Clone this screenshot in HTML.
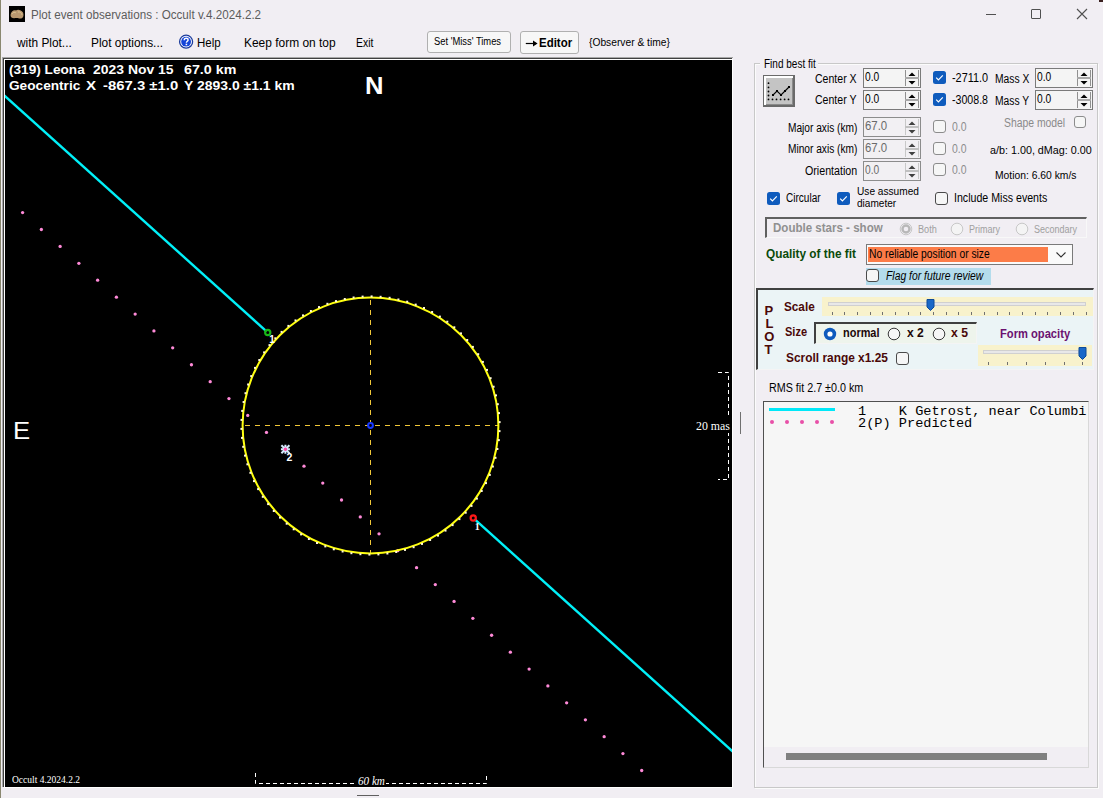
<!DOCTYPE html>
<html><head><meta charset="utf-8"><style>
html,body{margin:0;padding:0;}
body{width:1103px;height:798px;overflow:hidden;position:relative;background:#f1eef3;font-family:"Liberation Sans",sans-serif;}
.r{position:absolute;}
.t{position:absolute;white-space:pre;transform-origin:0 0;}
</style></head><body>
<div class="r" style="left:0;top:0;width:1px;height:798px;background:#8a8870"></div>
<svg class="r" style="left:9px;top:6px" width="16" height="16" viewBox="0 0 16 16">
<rect x="0" y="0" width="16" height="16" fill="#000"/>
<path d="M1.5 9 C2 5 5 3.5 7 4.5 C9 3 12 4 14 6.5 C15 9 14.5 12 12 12.5 C10 13 9 11.5 7 12 C4 12.5 1.5 12 1.5 9Z" fill="#b89870"/>
<path d="M3 8 C4 6 6 6 7 7 M9 6 C11 5.5 13 7 13 9" stroke="#d8c090" stroke-width="1" fill="none"/>
</svg>
<div id="t1" class="t" style="left:30.60px;top:9.14px;font-size:12px;line-height:12px;font-weight:normal;font-style:normal;color:#5c5c5c;font-family:'Liberation Sans', sans-serif;transform:scaleX(0.9698);">Plot event observations : Occult v.4.2024.2.2</div>
<div class="r" style="left:986px;top:14px;width:10px;height:1px;background:#505050"></div>
<div class="r" style="left:1031px;top:9px;width:8px;height:8px;border:1px solid #505050;border-radius:1px"></div>
<svg class="r" style="left:1076px;top:8px" width="12" height="12" viewBox="0 0 12 12"><path d="M1 1L11 11M11 1L1 11" stroke="#505050" stroke-width="1.1"/></svg>
<div class="r" style="left:1099px;top:0;width:4px;height:2px;background:#3a2020"></div>
<div id="t2" class="t" style="left:17.29px;top:37.14px;font-size:12px;line-height:12px;font-weight:normal;font-style:normal;color:#000;font-family:'Liberation Sans', sans-serif;transform:scaleX(0.9889);">with Plot...</div>
<div id="t3" class="t" style="left:91.30px;top:37.14px;font-size:12px;line-height:12px;font-weight:normal;font-style:normal;color:#000;font-family:'Liberation Sans', sans-serif;transform:scaleX(0.9907);">Plot options...</div>
<svg class="r" style="left:178px;top:34px" width="16" height="16" viewBox="0 0 16 16">
<circle cx="8.1" cy="7.7" r="6.5" fill="#fff" stroke="#1c3c9c" stroke-width="1.3"/>
<circle cx="8.1" cy="7.7" r="4.9" fill="#1444d8"/>
<path d="M6.2 6.3C6.2 4.9 7.1 4.3 8.2 4.3C9.4 4.3 10.1 5 10.1 6C10.1 7.2 8.4 7.5 8.4 8.8" stroke="#fff" stroke-width="1.4" fill="none"/>
<rect x="7.6" y="9.7" width="1.6" height="1.5" fill="#fff"/></svg>
<div id="t4" class="t" style="left:196.70px;top:37.14px;font-size:12px;line-height:12px;font-weight:normal;font-style:normal;color:#000;font-family:'Liberation Sans', sans-serif;transform:scaleX(0.9598);">Help</div>
<div id="t5" class="t" style="left:243.50px;top:37.14px;font-size:12px;line-height:12px;font-weight:normal;font-style:normal;color:#000;font-family:'Liberation Sans', sans-serif;transform:scaleX(0.9948);">Keep form on top</div>
<div id="t6" class="t" style="left:355.60px;top:37.14px;font-size:12px;line-height:12px;font-weight:normal;font-style:normal;color:#000;font-family:'Liberation Sans', sans-serif;transform:scaleX(0.8660);">Exit</div>
<div class="r" style="left:427px;top:31px;width:82px;height:20px;background:#f7f7f7;border:1px solid #b0b0b0;border-radius:3px"></div>
<div id="t7" class="t" style="left:434.40px;top:36.64px;font-size:10px;line-height:10px;font-weight:normal;font-style:normal;color:#000;font-family:'Liberation Sans', sans-serif;transform:scaleX(0.9361);">Set 'Miss' Times</div>
<div class="r" style="left:520px;top:31px;width:57px;height:21px;background:#f7f7f7;border:1px solid #b0b0b0;border-radius:3px"></div>
<svg class="r" style="left:525px;top:39px" width="14" height="9" viewBox="0 0 14 9"><path d="M0.8 4.5H11" stroke="#000" stroke-width="1.2"/><path d="M8 1.6L12.6 4.5L8 7.4Z" fill="#000"/></svg>
<div id="t8" class="t" style="left:538.60px;top:36.74px;font-size:12px;line-height:12px;font-weight:bold;font-style:normal;color:#000;font-family:'Liberation Sans', sans-serif;transform:scaleX(0.9544);">Editor</div>
<div id="t9" class="t" style="left:588.80px;top:37.39px;font-size:11px;line-height:11px;font-weight:normal;font-style:normal;color:#000;font-family:'Liberation Sans', sans-serif;transform:scaleX(0.9318);">{Observer &amp; time}</div>
<div class="r" style="left:2px;top:57px;width:731px;height:1px;background:#a8a8a8"></div>
<div class="r" style="left:2px;top:57px;width:1px;height:730px;background:#a8a8a8"></div>
<div class="r" style="left:3px;top:58px;width:729px;height:1px;background:#404040"></div>
<div class="r" style="left:3px;top:58px;width:1px;height:729px;background:#404040"></div>
<div class="r" style="left:4px;top:59px;width:729px;height:1px;background:#fff"></div>
<div class="r" style="left:4px;top:59px;width:1px;height:729px;background:#fff"></div>
<div class="r" style="left:732px;top:59px;width:1px;height:729px;background:#fff"></div>
<div class="r" style="left:4px;top:787px;width:729px;height:1px;background:#fff"></div>
<div class="r" style="left:5px;top:60px;width:727px;height:727px;background:#000"></div>
<svg class="r" style="left:5px;top:60px" width="727" height="727" viewBox="5 60 727 727">
<line x1="0" y1="91.53" x2="266.5" y2="331.3" stroke="#00f0f8" stroke-width="2.4"/>
<line x1="474.5" y1="519.2" x2="760" y2="776.08" stroke="#00f0f8" stroke-width="2.4"/>
<circle cx="22.60" cy="212.60" r="1.65" fill="#ff8ad8"/>
<circle cx="41.36" cy="229.51" r="1.65" fill="#ff8ad8"/>
<circle cx="60.12" cy="246.41" r="1.65" fill="#ff8ad8"/>
<circle cx="78.88" cy="263.32" r="1.65" fill="#ff8ad8"/>
<circle cx="97.64" cy="280.22" r="1.65" fill="#ff8ad8"/>
<circle cx="116.40" cy="297.13" r="1.65" fill="#ff8ad8"/>
<circle cx="135.16" cy="314.04" r="1.65" fill="#ff8ad8"/>
<circle cx="153.92" cy="330.94" r="1.65" fill="#ff8ad8"/>
<circle cx="172.68" cy="347.85" r="1.65" fill="#ff8ad8"/>
<circle cx="191.44" cy="364.75" r="1.65" fill="#ff8ad8"/>
<circle cx="210.20" cy="381.66" r="1.65" fill="#ff8ad8"/>
<circle cx="228.96" cy="398.57" r="1.65" fill="#ff8ad8"/>
<circle cx="247.72" cy="415.47" r="1.65" fill="#ff8ad8"/>
<circle cx="266.48" cy="432.38" r="1.65" fill="#ff8ad8"/>
<circle cx="285.24" cy="449.28" r="1.65" fill="#ff8ad8"/>
<circle cx="304.00" cy="466.19" r="1.65" fill="#ff8ad8"/>
<circle cx="322.76" cy="483.10" r="1.65" fill="#ff8ad8"/>
<circle cx="341.52" cy="500.00" r="1.65" fill="#ff8ad8"/>
<circle cx="360.28" cy="516.91" r="1.65" fill="#ff8ad8"/>
<circle cx="379.04" cy="533.81" r="1.65" fill="#ff8ad8"/>
<circle cx="397.80" cy="550.72" r="1.65" fill="#ff8ad8"/>
<circle cx="416.56" cy="567.63" r="1.65" fill="#ff8ad8"/>
<circle cx="435.32" cy="584.53" r="1.65" fill="#ff8ad8"/>
<circle cx="454.08" cy="601.44" r="1.65" fill="#ff8ad8"/>
<circle cx="472.84" cy="618.34" r="1.65" fill="#ff8ad8"/>
<circle cx="491.60" cy="635.25" r="1.65" fill="#ff8ad8"/>
<circle cx="510.36" cy="652.16" r="1.65" fill="#ff8ad8"/>
<circle cx="529.12" cy="669.06" r="1.65" fill="#ff8ad8"/>
<circle cx="547.88" cy="685.97" r="1.65" fill="#ff8ad8"/>
<circle cx="566.64" cy="702.87" r="1.65" fill="#ff8ad8"/>
<circle cx="585.40" cy="719.78" r="1.65" fill="#ff8ad8"/>
<circle cx="604.16" cy="736.69" r="1.65" fill="#ff8ad8"/>
<circle cx="622.92" cy="753.59" r="1.65" fill="#ff8ad8"/>
<circle cx="641.68" cy="770.50" r="1.65" fill="#ff8ad8"/>
<line x1="245" y1="425.5" x2="498" y2="425.5" stroke="#f0c838" stroke-width="1" stroke-dasharray="5 5"/>
<line x1="370.5" y1="300" x2="370.5" y2="553" stroke="#f0c838" stroke-width="1" stroke-dasharray="5 5"/>
<circle cx="370.5" cy="425.5" r="127.9" fill="none" stroke="#ffff10" stroke-width="2"/>
<rect x="498.5" y="430.1" width="2" height="2" fill="#fff8d8"/>
<rect x="497.8" y="439.1" width="2" height="2" fill="#fff8d8"/>
<rect x="496.4" y="448.0" width="2" height="2" fill="#fff8d8"/>
<rect x="494.5" y="456.8" width="2" height="2" fill="#fff8d8"/>
<rect x="491.9" y="465.5" width="2" height="2" fill="#fff8d8"/>
<rect x="488.8" y="473.9" width="2" height="2" fill="#fff8d8"/>
<rect x="485.0" y="482.1" width="2" height="2" fill="#fff8d8"/>
<rect x="480.7" y="490.0" width="2" height="2" fill="#fff8d8"/>
<rect x="475.9" y="497.6" width="2" height="2" fill="#fff8d8"/>
<rect x="470.5" y="504.9" width="2" height="2" fill="#fff8d8"/>
<rect x="464.7" y="511.7" width="2" height="2" fill="#fff8d8"/>
<rect x="458.4" y="518.1" width="2" height="2" fill="#fff8d8"/>
<rect x="451.6" y="524.1" width="2" height="2" fill="#fff8d8"/>
<rect x="444.5" y="529.6" width="2" height="2" fill="#fff8d8"/>
<rect x="437.0" y="534.6" width="2" height="2" fill="#fff8d8"/>
<rect x="429.1" y="539.0" width="2" height="2" fill="#fff8d8"/>
<rect x="421.0" y="542.9" width="2" height="2" fill="#fff8d8"/>
<rect x="412.6" y="546.2" width="2" height="2" fill="#fff8d8"/>
<rect x="404.0" y="548.9" width="2" height="2" fill="#fff8d8"/>
<rect x="395.2" y="551.0" width="2" height="2" fill="#fff8d8"/>
<rect x="386.4" y="552.5" width="2" height="2" fill="#fff8d8"/>
<rect x="377.4" y="553.4" width="2" height="2" fill="#fff8d8"/>
<rect x="368.4" y="553.6" width="2" height="2" fill="#fff8d8"/>
<rect x="359.4" y="553.2" width="2" height="2" fill="#fff8d8"/>
<rect x="350.4" y="552.2" width="2" height="2" fill="#fff8d8"/>
<rect x="341.6" y="550.5" width="2" height="2" fill="#fff8d8"/>
<rect x="332.8" y="548.3" width="2" height="2" fill="#fff8d8"/>
<rect x="324.3" y="545.4" width="2" height="2" fill="#fff8d8"/>
<rect x="316.0" y="542.0" width="2" height="2" fill="#fff8d8"/>
<rect x="307.9" y="538.0" width="2" height="2" fill="#fff8d8"/>
<rect x="300.1" y="533.4" width="2" height="2" fill="#fff8d8"/>
<rect x="292.7" y="528.3" width="2" height="2" fill="#fff8d8"/>
<rect x="285.7" y="522.7" width="2" height="2" fill="#fff8d8"/>
<rect x="279.0" y="516.6" width="2" height="2" fill="#fff8d8"/>
<rect x="272.8" y="510.0" width="2" height="2" fill="#fff8d8"/>
<rect x="267.1" y="503.1" width="2" height="2" fill="#fff8d8"/>
<rect x="261.8" y="495.8" width="2" height="2" fill="#fff8d8"/>
<rect x="257.1" y="488.1" width="2" height="2" fill="#fff8d8"/>
<rect x="253.0" y="480.1" width="2" height="2" fill="#fff8d8"/>
<rect x="249.4" y="471.8" width="2" height="2" fill="#fff8d8"/>
<rect x="246.4" y="463.3" width="2" height="2" fill="#fff8d8"/>
<rect x="244.0" y="454.6" width="2" height="2" fill="#fff8d8"/>
<rect x="242.2" y="445.8" width="2" height="2" fill="#fff8d8"/>
<rect x="241.0" y="436.9" width="2" height="2" fill="#fff8d8"/>
<rect x="240.4" y="427.9" width="2" height="2" fill="#fff8d8"/>
<rect x="240.5" y="418.9" width="2" height="2" fill="#fff8d8"/>
<rect x="241.2" y="409.9" width="2" height="2" fill="#fff8d8"/>
<rect x="242.6" y="401.0" width="2" height="2" fill="#fff8d8"/>
<rect x="244.5" y="392.2" width="2" height="2" fill="#fff8d8"/>
<rect x="247.1" y="383.5" width="2" height="2" fill="#fff8d8"/>
<rect x="250.2" y="375.1" width="2" height="2" fill="#fff8d8"/>
<rect x="254.0" y="366.9" width="2" height="2" fill="#fff8d8"/>
<rect x="258.3" y="359.0" width="2" height="2" fill="#fff8d8"/>
<rect x="263.1" y="351.4" width="2" height="2" fill="#fff8d8"/>
<rect x="268.5" y="344.1" width="2" height="2" fill="#fff8d8"/>
<rect x="274.3" y="337.3" width="2" height="2" fill="#fff8d8"/>
<rect x="280.6" y="330.9" width="2" height="2" fill="#fff8d8"/>
<rect x="287.4" y="324.9" width="2" height="2" fill="#fff8d8"/>
<rect x="294.5" y="319.4" width="2" height="2" fill="#fff8d8"/>
<rect x="302.0" y="314.4" width="2" height="2" fill="#fff8d8"/>
<rect x="309.9" y="310.0" width="2" height="2" fill="#fff8d8"/>
<rect x="318.0" y="306.1" width="2" height="2" fill="#fff8d8"/>
<rect x="326.4" y="302.8" width="2" height="2" fill="#fff8d8"/>
<rect x="335.0" y="300.1" width="2" height="2" fill="#fff8d8"/>
<rect x="343.8" y="298.0" width="2" height="2" fill="#fff8d8"/>
<rect x="352.6" y="296.5" width="2" height="2" fill="#fff8d8"/>
<rect x="361.6" y="295.6" width="2" height="2" fill="#fff8d8"/>
<rect x="370.6" y="295.4" width="2" height="2" fill="#fff8d8"/>
<rect x="379.6" y="295.8" width="2" height="2" fill="#fff8d8"/>
<rect x="388.6" y="296.8" width="2" height="2" fill="#fff8d8"/>
<rect x="397.4" y="298.5" width="2" height="2" fill="#fff8d8"/>
<rect x="406.2" y="300.7" width="2" height="2" fill="#fff8d8"/>
<rect x="414.7" y="303.6" width="2" height="2" fill="#fff8d8"/>
<rect x="423.0" y="307.0" width="2" height="2" fill="#fff8d8"/>
<rect x="431.1" y="311.0" width="2" height="2" fill="#fff8d8"/>
<rect x="438.9" y="315.6" width="2" height="2" fill="#fff8d8"/>
<rect x="446.3" y="320.7" width="2" height="2" fill="#fff8d8"/>
<rect x="453.3" y="326.3" width="2" height="2" fill="#fff8d8"/>
<rect x="460.0" y="332.4" width="2" height="2" fill="#fff8d8"/>
<rect x="466.2" y="339.0" width="2" height="2" fill="#fff8d8"/>
<rect x="471.9" y="345.9" width="2" height="2" fill="#fff8d8"/>
<rect x="477.2" y="353.2" width="2" height="2" fill="#fff8d8"/>
<rect x="481.9" y="360.9" width="2" height="2" fill="#fff8d8"/>
<rect x="486.0" y="368.9" width="2" height="2" fill="#fff8d8"/>
<rect x="489.6" y="377.2" width="2" height="2" fill="#fff8d8"/>
<rect x="492.6" y="385.7" width="2" height="2" fill="#fff8d8"/>
<rect x="495.0" y="394.4" width="2" height="2" fill="#fff8d8"/>
<rect x="496.8" y="403.2" width="2" height="2" fill="#fff8d8"/>
<rect x="498.0" y="412.1" width="2" height="2" fill="#fff8d8"/>
<rect x="498.6" y="421.1" width="2" height="2" fill="#fff8d8"/>
<circle cx="370.5" cy="425.5" r="2.4" fill="#000010" stroke="#1838ff" stroke-width="2"/>
<circle cx="267.75" cy="332.5" r="2.6" fill="none" stroke="#18b818" stroke-width="2.2"/>
<circle cx="473.25" cy="518" r="2.6" fill="none" stroke="#ff1818" stroke-width="2.2"/>
<path d="M281.4 445.3L289.4 453.3M289.4 445.3L281.4 453.3M280.9 449.3L289.9 449.3M285.4 444.8L285.4 453.8" stroke="#d8ecff" stroke-width="2"/>
<circle cx="285.4" cy="449.3" r="1.7" fill="#ff48a8"/>
<text x="269.2" y="343.3" font-size="10" font-weight="bold" fill="#fff" font-family="Liberation Sans">1</text>
<text x="474.8" y="529.8" font-size="10" font-weight="bold" fill="#fff" font-family="Liberation Serif">1</text>
<text x="286.6" y="460.5" font-size="10.5" font-weight="bold" fill="#fff" font-family="Liberation Sans">2</text>
<path d="M718 372.5H728.5V479.5H718" fill="none" stroke="#fff" stroke-width="1" stroke-dasharray="4 3"/>
<path d="M255.5 773V783.5H486.5V773" fill="none" stroke="#fff" stroke-width="1" stroke-dasharray="4 3"/>
<rect x="700" y="417" width="30" height="16" fill="#000"/>
</svg>
<div id="t10" class="t" style="left:8.70px;top:63.07px;font-size:13.5px;line-height:13.5px;font-weight:bold;font-style:normal;color:#fff;font-family:'Liberation Sans', sans-serif;transform:scaleX(1.0091);">(319) Leona</div>
<div id="t11" class="t" style="left:92.90px;top:63.07px;font-size:13.5px;line-height:13.5px;font-weight:bold;font-style:normal;color:#fff;font-family:'Liberation Sans', sans-serif;transform:scaleX(1.0325);">2023 Nov 15</div>
<div id="t12" class="t" style="left:184.10px;top:63.07px;font-size:13.5px;line-height:13.5px;font-weight:bold;font-style:normal;color:#fff;font-family:'Liberation Sans', sans-serif;transform:scaleX(1.0558);">67.0 km</div>
<div id="t13" class="t" style="left:8.70px;top:79.07px;font-size:13.5px;line-height:13.5px;font-weight:bold;font-style:normal;color:#fff;font-family:'Liberation Sans', sans-serif;transform:scaleX(1.0110);">Geocentric</div>
<div id="t14" class="t" style="left:86.40px;top:79.07px;font-size:13.5px;line-height:13.5px;font-weight:bold;font-style:normal;color:#fff;font-family:'Liberation Sans', sans-serif;transform:scaleX(1.1222);">X</div>
<div id="t15" class="t" style="left:103.00px;top:79.07px;font-size:13.5px;line-height:13.5px;font-weight:bold;font-style:normal;color:#fff;font-family:'Liberation Sans', sans-serif;transform:scaleX(1.1020);">-867.3 &plusmn;1.0</div>
<div id="t16" class="t" style="left:184.10px;top:79.07px;font-size:13.5px;line-height:13.5px;font-weight:bold;font-style:normal;color:#fff;font-family:'Liberation Sans', sans-serif;transform:scaleX(1.0342);">Y 2893.0 &plusmn;1.1 km</div>
<div id="t17" class="t" style="left:365.43px;top:74.28px;font-size:24px;line-height:24px;font-weight:bold;font-style:normal;color:#fff;font-family:'Liberation Sans', sans-serif;transform:scaleX(1.0667);">N</div>
<div id="t18" class="t" style="left:13.43px;top:419.28px;font-size:24px;line-height:24px;font-weight:normal;font-style:normal;color:#fff;font-family:'Liberation Sans', sans-serif;transform:scaleX(1.0714);">E</div>
<div id="t19" class="t" style="left:696.00px;top:419.01px;font-size:13px;line-height:13px;font-weight:normal;font-style:normal;color:#fff;font-family:'Liberation Serif', serif;transform:scaleX(0.9103);">20 mas</div>
<div class="r" style="left:357px;top:776px;width:29px;height:10px;background:#000"></div>
<div id="t20" class="t" style="left:358.30px;top:775.97px;font-size:11.5px;line-height:11.5px;font-weight:normal;font-style:italic;color:#fff;font-family:'Liberation Serif', serif;transform:scaleX(0.9680);">60 km</div>
<div id="t21" class="t" style="left:12.00px;top:774.62px;font-size:10px;line-height:10px;font-weight:normal;font-style:normal;color:#fff;font-family:'Liberation Serif', serif;transform:scaleX(0.9490);">Occult 4.2024.2.2</div>
<div class="r" style="left:740px;top:412px;width:1px;height:22px;background:#707070"></div>
<div class="r" style="left:357px;top:795px;width:22px;height:1px;background:#606060"></div>
<div class="r" style="left:754px;top:63px;width:342px;height:723px;border:1px solid #c8c8c8;box-shadow:inset 1px 1px 0 #fbfbfb, 1px 1px 0 #fbfbfb"></div>
<div class="r" style="left:760px;top:60px;width:58px;height:10px;background:#f1eef3"></div>
<div id="t22" class="t" style="left:763.60px;top:57.64px;font-size:12px;line-height:12px;font-weight:normal;font-style:normal;color:#000;font-family:'Liberation Sans', sans-serif;transform:scaleX(0.8342);">Find best fit</div>
<svg class="r" style="left:763px;top:75px" width="32" height="32" viewBox="763 75 32 32">
<rect x="763" y="75" width="32" height="32" fill="#6a6a6a"/>
<rect x="764" y="76" width="29" height="29" fill="#ffffff"/>
<rect x="766" y="78" width="27" height="27" fill="#8a8a8a"/>
<rect x="766" y="78" width="26" height="26" fill="#c4c4c4"/>
<g fill="#000"><circle cx="768.5" cy="83.2" r="0.9"/><circle cx="768.5" cy="87.4" r="0.9"/><circle cx="768.5" cy="91.5" r="0.9"/><circle cx="768.5" cy="95.5" r="0.9"/>
<circle cx="768.5" cy="99.4" r="0.9"/><circle cx="772.5" cy="99.4" r="0.9"/><circle cx="776.5" cy="99.4" r="0.9"/><circle cx="780.6" cy="99.4" r="0.9"/><circle cx="784.6" cy="99.4" r="0.9"/><circle cx="788.5" cy="99.4" r="0.9"/>
<rect x="772" y="94" width="2" height="2"/><rect x="776" y="90" width="2" height="2"/><rect x="780" y="94" width="2" height="2"/><rect x="784" y="90" width="2" height="2"/><rect x="788" y="86" width="2" height="2"/></g>
<path d="M773 95L777 91L781 95L785 91L789 87" stroke="#000" stroke-width="1.1" fill="none"/></svg>
<div class="r" style="left:863px;top:68px;width:58px;height:20px;box-sizing:border-box;border:1px solid #7a7a7a;background:#f4f4f4"></div>
<div class="r" style="left:905px;top:70px;width:14px;height:16px;box-sizing:border-box;border-left:1px solid #909090;border-right:1px solid #909090"></div>
<div class="r" style="left:905px;top:77px;width:14px;height:2px;background:#a8a8a8"></div>
<svg class="r" style="left:905px;top:70px" width="14" height="16" viewBox="0 0 14 16"><path d="M3.5 6L7 2.5L10.5 6Z" fill="#000"/><path d="M3.5 11L7 14.5L10.5 11Z" fill="#000"/></svg>
<div id="t23" class="t" style="left:865.20px;top:70.84px;font-size:12px;line-height:12px;font-weight:normal;font-style:normal;color:#000;font-family:'Liberation Sans', sans-serif;transform:scaleX(0.8525);">0.0</div>
<div class="r" style="left:863px;top:90px;width:58px;height:20px;box-sizing:border-box;border:1px solid #7a7a7a;background:#f4f4f4"></div>
<div class="r" style="left:905px;top:92px;width:14px;height:16px;box-sizing:border-box;border-left:1px solid #909090;border-right:1px solid #909090"></div>
<div class="r" style="left:905px;top:99px;width:14px;height:2px;background:#a8a8a8"></div>
<svg class="r" style="left:905px;top:92px" width="14" height="16" viewBox="0 0 14 16"><path d="M3.5 6L7 2.5L10.5 6Z" fill="#000"/><path d="M3.5 11L7 14.5L10.5 11Z" fill="#000"/></svg>
<div id="t24" class="t" style="left:865.20px;top:92.84px;font-size:12px;line-height:12px;font-weight:normal;font-style:normal;color:#000;font-family:'Liberation Sans', sans-serif;transform:scaleX(0.8525);">0.0</div>
<div class="r" style="left:1035px;top:68px;width:58px;height:20px;box-sizing:border-box;border:1px solid #7a7a7a;background:#f4f4f4"></div>
<div class="r" style="left:1077px;top:70px;width:14px;height:16px;box-sizing:border-box;border-left:1px solid #909090;border-right:1px solid #909090"></div>
<div class="r" style="left:1077px;top:77px;width:14px;height:2px;background:#a8a8a8"></div>
<svg class="r" style="left:1077px;top:70px" width="14" height="16" viewBox="0 0 14 16"><path d="M3.5 6L7 2.5L10.5 6Z" fill="#000"/><path d="M3.5 11L7 14.5L10.5 11Z" fill="#000"/></svg>
<div id="t25" class="t" style="left:1037.20px;top:70.84px;font-size:12px;line-height:12px;font-weight:normal;font-style:normal;color:#000;font-family:'Liberation Sans', sans-serif;transform:scaleX(0.8525);">0.0</div>
<div class="r" style="left:1035px;top:90px;width:58px;height:20px;box-sizing:border-box;border:1px solid #7a7a7a;background:#f4f4f4"></div>
<div class="r" style="left:1077px;top:92px;width:14px;height:16px;box-sizing:border-box;border-left:1px solid #909090;border-right:1px solid #909090"></div>
<div class="r" style="left:1077px;top:99px;width:14px;height:2px;background:#a8a8a8"></div>
<svg class="r" style="left:1077px;top:92px" width="14" height="16" viewBox="0 0 14 16"><path d="M3.5 6L7 2.5L10.5 6Z" fill="#000"/><path d="M3.5 11L7 14.5L10.5 11Z" fill="#000"/></svg>
<div id="t26" class="t" style="left:1037.20px;top:92.84px;font-size:12px;line-height:12px;font-weight:normal;font-style:normal;color:#000;font-family:'Liberation Sans', sans-serif;transform:scaleX(0.8525);">0.0</div>
<div class="r" style="left:863px;top:117px;width:58px;height:20px;box-sizing:border-box;border:1px solid #8c8c8c;background:#f2f0f3"></div>
<div class="r" style="left:905px;top:119px;width:14px;height:16px;box-sizing:border-box;border-left:1px solid #c8c8c8;border-right:1px solid #c8c8c8"></div>
<div class="r" style="left:905px;top:126px;width:14px;height:2px;background:#c0c0c0"></div>
<svg class="r" style="left:905px;top:119px" width="14" height="16" viewBox="0 0 14 16"><path d="M3.5 6L7 2.5L10.5 6Z" fill="#404040"/><path d="M3.5 11L7 14.5L10.5 11Z" fill="#404040"/></svg>
<div id="t27" class="t" style="left:865.20px;top:119.84px;font-size:12px;line-height:12px;font-weight:normal;font-style:normal;color:#6a6a6a;font-family:'Liberation Sans', sans-serif;transform:scaleX(0.9501);">67.0</div>
<div class="r" style="left:863px;top:139px;width:58px;height:20px;box-sizing:border-box;border:1px solid #8c8c8c;background:#f2f0f3"></div>
<div class="r" style="left:905px;top:141px;width:14px;height:16px;box-sizing:border-box;border-left:1px solid #c8c8c8;border-right:1px solid #c8c8c8"></div>
<div class="r" style="left:905px;top:148px;width:14px;height:2px;background:#c0c0c0"></div>
<svg class="r" style="left:905px;top:141px" width="14" height="16" viewBox="0 0 14 16"><path d="M3.5 6L7 2.5L10.5 6Z" fill="#404040"/><path d="M3.5 11L7 14.5L10.5 11Z" fill="#404040"/></svg>
<div id="t28" class="t" style="left:865.20px;top:141.84px;font-size:12px;line-height:12px;font-weight:normal;font-style:normal;color:#6a6a6a;font-family:'Liberation Sans', sans-serif;transform:scaleX(0.9501);">67.0</div>
<div class="r" style="left:863px;top:161px;width:58px;height:20px;box-sizing:border-box;border:1px solid #8c8c8c;background:#f2f0f3"></div>
<div class="r" style="left:905px;top:163px;width:14px;height:16px;box-sizing:border-box;border-left:1px solid #c8c8c8;border-right:1px solid #c8c8c8"></div>
<div class="r" style="left:905px;top:170px;width:14px;height:2px;background:#c0c0c0"></div>
<svg class="r" style="left:905px;top:163px" width="14" height="16" viewBox="0 0 14 16"><path d="M3.5 6L7 2.5L10.5 6Z" fill="#404040"/><path d="M3.5 11L7 14.5L10.5 11Z" fill="#404040"/></svg>
<div id="t29" class="t" style="left:865.20px;top:163.84px;font-size:12px;line-height:12px;font-weight:normal;font-style:normal;color:#6a6a6a;font-family:'Liberation Sans', sans-serif;transform:scaleX(0.8525);">0.0</div>
<div id="t30" class="t" style="left:815.40px;top:72.84px;font-size:12px;line-height:12px;font-weight:normal;font-style:normal;color:#000;font-family:'Liberation Sans', sans-serif;transform:scaleX(0.8785);">Center X</div>
<div id="t31" class="t" style="left:815.40px;top:94.34px;font-size:12px;line-height:12px;font-weight:normal;font-style:normal;color:#000;font-family:'Liberation Sans', sans-serif;transform:scaleX(0.8785);">Center Y</div>
<svg class="r" style="left:933px;top:71px" width="13" height="13" viewBox="0 0 13 13"><rect x="0" y="0" width="13" height="13" rx="2.5" fill="#0f5bbd"/><path d="M3.2 6.6L5.4 8.8L9.8 4.4" stroke="#fff" stroke-width="1.2" fill="none"/></svg>
<svg class="r" style="left:933px;top:93px" width="13" height="13" viewBox="0 0 13 13"><rect x="0" y="0" width="13" height="13" rx="2.5" fill="#0f5bbd"/><path d="M3.2 6.6L5.4 8.8L9.8 4.4" stroke="#fff" stroke-width="1.2" fill="none"/></svg>
<div id="t32" class="t" style="left:951.60px;top:72.04px;font-size:12px;line-height:12px;font-weight:normal;font-style:normal;color:#000;font-family:'Liberation Sans', sans-serif;transform:scaleX(0.9045);">-2711.0</div>
<div id="t33" class="t" style="left:951.60px;top:94.14px;font-size:12px;line-height:12px;font-weight:normal;font-style:normal;color:#000;font-family:'Liberation Sans', sans-serif;transform:scaleX(0.8848);">-3008.8</div>
<div id="t34" class="t" style="left:994.70px;top:72.84px;font-size:12px;line-height:12px;font-weight:normal;font-style:normal;color:#000;font-family:'Liberation Sans', sans-serif;transform:scaleX(0.8574);">Mass X</div>
<div id="t35" class="t" style="left:994.70px;top:94.84px;font-size:12px;line-height:12px;font-weight:normal;font-style:normal;color:#000;font-family:'Liberation Sans', sans-serif;transform:scaleX(0.8574);">Mass Y</div>
<div id="t36" class="t" style="left:787.60px;top:121.94px;font-size:12px;line-height:12px;font-weight:normal;font-style:normal;color:#000;font-family:'Liberation Sans', sans-serif;transform:scaleX(0.8463);">Major axis (km)</div>
<div id="t37" class="t" style="left:787.60px;top:143.34px;font-size:12px;line-height:12px;font-weight:normal;font-style:normal;color:#000;font-family:'Liberation Sans', sans-serif;transform:scaleX(0.8463);">Minor axis (km)</div>
<div id="t38" class="t" style="left:805.40px;top:164.54px;font-size:12px;line-height:12px;font-weight:normal;font-style:normal;color:#000;font-family:'Liberation Sans', sans-serif;transform:scaleX(0.8893);">Orientation</div>
<div class="r" style="left:933px;top:120px;width:13px;height:13px;box-sizing:border-box;border:1px solid #8c8c8c;border-radius:3px;background:#f6f6f6"></div>
<div class="r" style="left:933px;top:142px;width:13px;height:13px;box-sizing:border-box;border:1px solid #8c8c8c;border-radius:3px;background:#f6f6f6"></div>
<div class="r" style="left:933px;top:163px;width:13px;height:13px;box-sizing:border-box;border:1px solid #8c8c8c;border-radius:3px;background:#f6f6f6"></div>
<div id="t39" class="t" style="left:952.00px;top:121.34px;font-size:12px;line-height:12px;font-weight:normal;font-style:normal;color:#8c8c8c;font-family:'Liberation Sans', sans-serif;transform:scaleX(0.8702);">0.0</div>
<div id="t40" class="t" style="left:952.00px;top:142.64px;font-size:12px;line-height:12px;font-weight:normal;font-style:normal;color:#8c8c8c;font-family:'Liberation Sans', sans-serif;transform:scaleX(0.8702);">0.0</div>
<div id="t41" class="t" style="left:952.00px;top:163.84px;font-size:12px;line-height:12px;font-weight:normal;font-style:normal;color:#8c8c8c;font-family:'Liberation Sans', sans-serif;transform:scaleX(0.8702);">0.0</div>
<div id="t42" class="t" style="left:1004.40px;top:116.74px;font-size:12px;line-height:12px;font-weight:normal;font-style:normal;color:#8a8a8a;font-family:'Liberation Sans', sans-serif;transform:scaleX(0.8651);">Shape model</div>
<div class="r" style="left:1074px;top:116px;width:12px;height:12px;box-sizing:border-box;border:1px solid #8c8c8c;border-radius:3px;background:#f6f6f6"></div>
<div id="t43" class="t" style="left:990.00px;top:144.79px;font-size:11px;line-height:11px;font-weight:normal;font-style:normal;color:#000;font-family:'Liberation Sans', sans-serif;transform:scaleX(0.9784);">a/b: 1.00, dMag: 0.00</div>
<div id="t44" class="t" style="left:994.80px;top:169.99px;font-size:11px;line-height:11px;font-weight:normal;font-style:normal;color:#000;font-family:'Liberation Sans', sans-serif;transform:scaleX(0.9380);">Motion: 6.60 km/s</div>
<svg class="r" style="left:767px;top:192px" width="13" height="13" viewBox="0 0 13 13"><rect x="0" y="0" width="13" height="13" rx="2.5" fill="#0f5bbd"/><path d="M3.2 6.6L5.4 8.8L9.8 4.4" stroke="#fff" stroke-width="1.2" fill="none"/></svg>
<div id="t45" class="t" style="left:785.80px;top:192.14px;font-size:12px;line-height:12px;font-weight:normal;font-style:normal;color:#000;font-family:'Liberation Sans', sans-serif;transform:scaleX(0.8369);">Circular</div>
<svg class="r" style="left:837px;top:192px" width="13" height="13" viewBox="0 0 13 13"><rect x="0" y="0" width="13" height="13" rx="2.5" fill="#0f5bbd"/><path d="M3.2 6.6L5.4 8.8L9.8 4.4" stroke="#fff" stroke-width="1.2" fill="none"/></svg>
<div id="t46" class="t" style="left:856.50px;top:185.69px;font-size:11px;line-height:11px;font-weight:normal;font-style:normal;color:#000;font-family:'Liberation Sans', sans-serif;transform:scaleX(0.9205);">Use assumed</div>
<div id="t47" class="t" style="left:856.50px;top:197.89px;font-size:11px;line-height:11px;font-weight:normal;font-style:normal;color:#000;font-family:'Liberation Sans', sans-serif;transform:scaleX(0.9158);">diameter</div>
<div class="r" style="left:935px;top:192px;width:13px;height:13px;box-sizing:border-box;border:1px solid #4a4a4a;border-radius:3px;background:#f6f6f6"></div>
<div id="t48" class="t" style="left:953.61px;top:192.14px;font-size:12px;line-height:12px;font-weight:normal;font-style:normal;color:#000;font-family:'Liberation Sans', sans-serif;transform:scaleX(0.8852);">Include Miss events</div>
<div class="r" style="left:765px;top:217px;width:322px;height:21px;box-sizing:border-box;border:1px solid;border-color:#606060 #f8f8f8 #f8f8f8 #606060;border-width:2px 1px 1px 2px"></div>
<div id="t49" class="t" style="left:773.40px;top:221.84px;font-size:12px;line-height:12px;font-weight:bold;font-style:normal;color:#909090;font-family:'Liberation Sans', sans-serif;transform:scaleX(0.9618);">Double stars - show</div>
<svg class="r" style="left:898.7px;top:221.7px" width="14" height="14" viewBox="0 0 14 14"><circle cx="7" cy="7" r="5.8" fill="none" stroke="#c8c8c8" stroke-width="1"/><circle cx="7" cy="7" r="3.5" fill="none" stroke="#b8b8b8" stroke-width="2.4"/></svg>
<div id="t50" class="t" style="left:917.70px;top:224.73px;font-size:10px;line-height:10px;font-weight:normal;font-style:normal;color:#a0a0a0;font-family:'Liberation Sans', sans-serif;transform:scaleX(0.9146);">Both</div>
<svg class="r" style="left:950.0px;top:221.7px" width="14" height="14" viewBox="0 0 14 14"><circle cx="7" cy="7" r="5.8" fill="#f4f4f4" stroke="#c8c8c8" stroke-width="1"/></svg>
<div id="t51" class="t" style="left:969.00px;top:224.73px;font-size:10px;line-height:10px;font-weight:normal;font-style:normal;color:#a0a0a0;font-family:'Liberation Sans', sans-serif;transform:scaleX(0.9000);">Primary</div>
<svg class="r" style="left:1015.3px;top:221.7px" width="14" height="14" viewBox="0 0 14 14"><circle cx="7" cy="7" r="5.8" fill="#f4f4f4" stroke="#c8c8c8" stroke-width="1"/></svg>
<div id="t52" class="t" style="left:1034.00px;top:224.73px;font-size:10px;line-height:10px;font-weight:normal;font-style:normal;color:#a0a0a0;font-family:'Liberation Sans', sans-serif;transform:scaleX(0.8994);">Secondary</div>
<div id="t53" class="t" style="left:766.00px;top:248.14px;font-size:12px;line-height:12px;font-weight:bold;font-style:normal;color:#0a4a0a;font-family:'Liberation Sans', sans-serif;transform:scaleX(0.9854);">Quality of the fit</div>
<div class="r" style="left:866px;top:244px;width:207px;height:21px;box-sizing:border-box;border:1px solid #7a7a7a;background:#fafafa"></div>
<div class="r" style="left:868px;top:247px;width:180px;height:15px;background:#fc7c48"></div>
<div id="t54" class="t" style="left:869.00px;top:247.94px;font-size:12px;line-height:12px;font-weight:normal;font-style:normal;color:#000;font-family:'Liberation Sans', sans-serif;transform:scaleX(0.8578);">No reliable position or size</div>
<svg class="r" style="left:1055px;top:251px" width="12" height="8" viewBox="0 0 12 8"><path d="M1.5 1.5L6 6L10.5 1.5" stroke="#303030" stroke-width="1.1" fill="none"/></svg>
<div class="r" style="left:866px;top:268px;width:125px;height:17px;background:#b4dcec"></div>
<div class="r" style="left:866px;top:269px;width:13px;height:13px;box-sizing:border-box;border:1px solid #4a4a4a;border-radius:3px;background:#f6f6f6"></div>
<div id="t55" class="t" style="left:886.00px;top:270.14px;font-size:12px;line-height:12px;font-weight:normal;font-style:italic;color:#000;font-family:'Liberation Sans', sans-serif;transform:scaleX(0.8637);">Flag for future review</div>
<div class="r" style="left:756px;top:288px;width:338px;height:82px;box-sizing:border-box;border:1px solid;border-color:#404040 #f4f4f4 #f4f4f4 #404040;border-width:2px 1px 1px 2px;background:#ebf4f6"></div>
<div id="t56" class="t" style="left:764.50px;top:304.20px;font-size:13px;line-height:13px;font-weight:bold;font-style:normal;color:#4a0808;font-family:'Liberation Sans', sans-serif;">P</div>
<div id="t57" class="t" style="left:765.50px;top:316.80px;font-size:13px;line-height:13px;font-weight:bold;font-style:normal;color:#4a0808;font-family:'Liberation Sans', sans-serif;">L</div>
<div id="t58" class="t" style="left:764.20px;top:330.00px;font-size:13px;line-height:13px;font-weight:bold;font-style:normal;color:#4a0808;font-family:'Liberation Sans', sans-serif;">O</div>
<div id="t59" class="t" style="left:764.50px;top:342.60px;font-size:13px;line-height:13px;font-weight:bold;font-style:normal;color:#4a0808;font-family:'Liberation Sans', sans-serif;">T</div>
<div id="t60" class="t" style="left:784.30px;top:300.54px;font-size:12px;line-height:12px;font-weight:bold;font-style:normal;color:#4a0808;font-family:'Liberation Sans', sans-serif;transform:scaleX(0.9784);">Scale</div>
<div class="r" style="left:822px;top:297px;width:271px;height:19px;background:#f8f2cc"></div>
<div class="r" style="left:828px;top:302px;width:258px;height:4px;box-sizing:border-box;border:1px solid #d0d0d0;background:#e8e8e8"></div>
<svg class="r" style="left:926px;top:299px" width="9" height="12" viewBox="0 0 9 12"><path d="M1 0.5H8V8L4.5 11.5L1 8Z" fill="#1a68c8" stroke="#0c4a9a" stroke-width="1"/></svg>
<div class="r" style="left:832px;top:312px;width:1px;height:3px;background:#707070"></div><div class="r" style="left:844px;top:312px;width:1px;height:3px;background:#707070"></div><div class="r" style="left:857px;top:312px;width:1px;height:3px;background:#707070"></div><div class="r" style="left:870px;top:312px;width:1px;height:3px;background:#707070"></div><div class="r" style="left:882px;top:312px;width:1px;height:3px;background:#707070"></div><div class="r" style="left:895px;top:312px;width:1px;height:3px;background:#707070"></div><div class="r" style="left:908px;top:312px;width:1px;height:3px;background:#707070"></div><div class="r" style="left:920px;top:312px;width:1px;height:3px;background:#707070"></div><div class="r" style="left:933px;top:312px;width:1px;height:3px;background:#707070"></div><div class="r" style="left:946px;top:312px;width:1px;height:3px;background:#707070"></div><div class="r" style="left:958px;top:312px;width:1px;height:3px;background:#707070"></div><div class="r" style="left:971px;top:312px;width:1px;height:3px;background:#707070"></div><div class="r" style="left:984px;top:312px;width:1px;height:3px;background:#707070"></div><div class="r" style="left:997px;top:312px;width:1px;height:3px;background:#707070"></div><div class="r" style="left:1009px;top:312px;width:1px;height:3px;background:#707070"></div><div class="r" style="left:1022px;top:312px;width:1px;height:3px;background:#707070"></div><div class="r" style="left:1035px;top:312px;width:1px;height:3px;background:#707070"></div><div class="r" style="left:1047px;top:312px;width:1px;height:3px;background:#707070"></div><div class="r" style="left:1060px;top:312px;width:1px;height:3px;background:#707070"></div><div class="r" style="left:1073px;top:312px;width:1px;height:3px;background:#707070"></div><div class="r" style="left:1086px;top:312px;width:1px;height:3px;background:#707070"></div>
<div id="t61" class="t" style="left:785.00px;top:326.14px;font-size:12px;line-height:12px;font-weight:bold;font-style:normal;color:#4a0808;font-family:'Liberation Sans', sans-serif;transform:scaleX(0.9204);">Size</div>
<div class="r" style="left:814px;top:322px;width:163px;height:22px;box-sizing:border-box;border:1px solid;border-color:#404040 #f4f4f4 #f4f4f4 #404040;border-width:2px 1px 1px 2px;background:#eef4ec"></div>
<svg class="r" style="left:823.4px;top:326.5px" width="14" height="14" viewBox="0 0 14 14"><circle cx="7" cy="7" r="6.2" fill="#0f5bbd"/><circle cx="7" cy="7" r="2.6" fill="#fff"/></svg>
<div id="t62" class="t" style="left:842.70px;top:327.34px;font-size:12px;line-height:12px;font-weight:bold;font-style:normal;color:#200808;font-family:'Liberation Sans', sans-serif;transform:scaleX(0.9124);">normal</div>
<svg class="r" style="left:887.0px;top:326.5px" width="14" height="14" viewBox="0 0 14 14"><circle cx="7" cy="7" r="5.8" fill="#f6f6f6" stroke="#3a3a3a" stroke-width="1"/></svg>
<div id="t63" class="t" style="left:906.60px;top:327.34px;font-size:12px;line-height:12px;font-weight:bold;font-style:normal;color:#200808;font-family:'Liberation Sans', sans-serif;transform:scaleX(1.0054);">x 2</div>
<svg class="r" style="left:931.6px;top:326.5px" width="14" height="14" viewBox="0 0 14 14"><circle cx="7" cy="7" r="5.8" fill="#f6f6f6" stroke="#3a3a3a" stroke-width="1"/></svg>
<div id="t64" class="t" style="left:950.70px;top:327.34px;font-size:12px;line-height:12px;font-weight:bold;font-style:normal;color:#4a0808;font-family:'Liberation Sans', sans-serif;transform:scaleX(1.0172);">x 5</div>
<div id="t65" class="t" style="left:999.60px;top:328.04px;font-size:12px;line-height:12px;font-weight:bold;font-style:normal;color:#6a1070;font-family:'Liberation Sans', sans-serif;transform:scaleX(0.9303);">Form opacity</div>
<div class="r" style="left:978px;top:345px;width:114px;height:21px;background:#f8f2cc"></div>
<div class="r" style="left:983px;top:350px;width:96px;height:4px;box-sizing:border-box;border:1px solid #d0d0d0;background:#e8e8e8"></div>
<svg class="r" style="left:1078px;top:347px" width="9" height="13" viewBox="0 0 9 13"><path d="M1 0.5H8V9L4.5 12.5L1 9Z" fill="#1a68c8" stroke="#0c4a9a" stroke-width="1"/></svg>
<div class="r" style="left:988px;top:362px;width:1px;height:3px;background:#707070"></div><div class="r" style="left:1007px;top:362px;width:1px;height:3px;background:#707070"></div><div class="r" style="left:1026px;top:362px;width:1px;height:3px;background:#707070"></div><div class="r" style="left:1045px;top:362px;width:1px;height:3px;background:#707070"></div><div class="r" style="left:1064px;top:362px;width:1px;height:3px;background:#707070"></div><div class="r" style="left:1082px;top:362px;width:1px;height:3px;background:#707070"></div>
<div id="t66" class="t" style="left:785.60px;top:352.24px;font-size:12px;line-height:12px;font-weight:bold;font-style:normal;color:#4a0808;font-family:'Liberation Sans', sans-serif;transform:scaleX(0.9918);">Scroll range x1.25</div>
<div class="r" style="left:896px;top:352px;width:13px;height:13px;box-sizing:border-box;border:1px solid #4a4a4a;border-radius:3px;background:#f6f6f6"></div>
<div id="t67" class="t" style="left:769.44px;top:381.72px;font-size:12.5px;line-height:12.5px;font-weight:normal;font-style:normal;color:#000;font-family:'Liberation Sans', sans-serif;transform:scaleX(0.8591);">RMS fit 2.7 &plusmn;0.0 km</div>
<div class="r" style="left:763px;top:401px;width:326px;height:367px;box-sizing:border-box;border:1px solid;border-color:#505050 #d8d8d8 #d8d8d8 #505050;border-width:1px 1px 1px 1px"></div>
<div class="r" style="left:764px;top:402px;width:324px;height:345px;background:#f6f6f6"></div>
<div class="r" style="left:786px;top:753px;width:261px;height:7px;background:#808080"></div>
<div class="r" style="left:769px;top:408px;width:66px;height:3px;background:#00e8f8"></div>
<div class="r" style="left:769.8px;top:420.4px;width:4px;height:4px;border-radius:2px;background:#e850a8"></div><div class="r" style="left:784.7px;top:420.4px;width:4px;height:4px;border-radius:2px;background:#e850a8"></div><div class="r" style="left:799.7px;top:420.4px;width:4px;height:4px;border-radius:2px;background:#e850a8"></div><div class="r" style="left:814.5px;top:420.4px;width:4px;height:4px;border-radius:2px;background:#e850a8"></div><div class="r" style="left:829.5px;top:420.4px;width:4px;height:4px;border-radius:2px;background:#e850a8"></div>
<div class="r" style="left:764px;top:402px;width:324px;height:40px;overflow:hidden">
<div id="t68" class="t" style="left:94.20px;top:4.02px;font-size:12.5px;line-height:12.5px;font-weight:normal;font-style:normal;color:#000;font-family:'Liberation Mono', monospace;transform:scaleX(1.088);">1    K Getrost, near Columbi</div>
<div id="t69" class="t" style="left:94.20px;top:16.02px;font-size:12.5px;line-height:12.5px;font-weight:normal;font-style:normal;color:#000;font-family:'Liberation Mono', monospace;transform:scaleX(1.088);">2(P) Predicted</div>
</div>
</body></html>
